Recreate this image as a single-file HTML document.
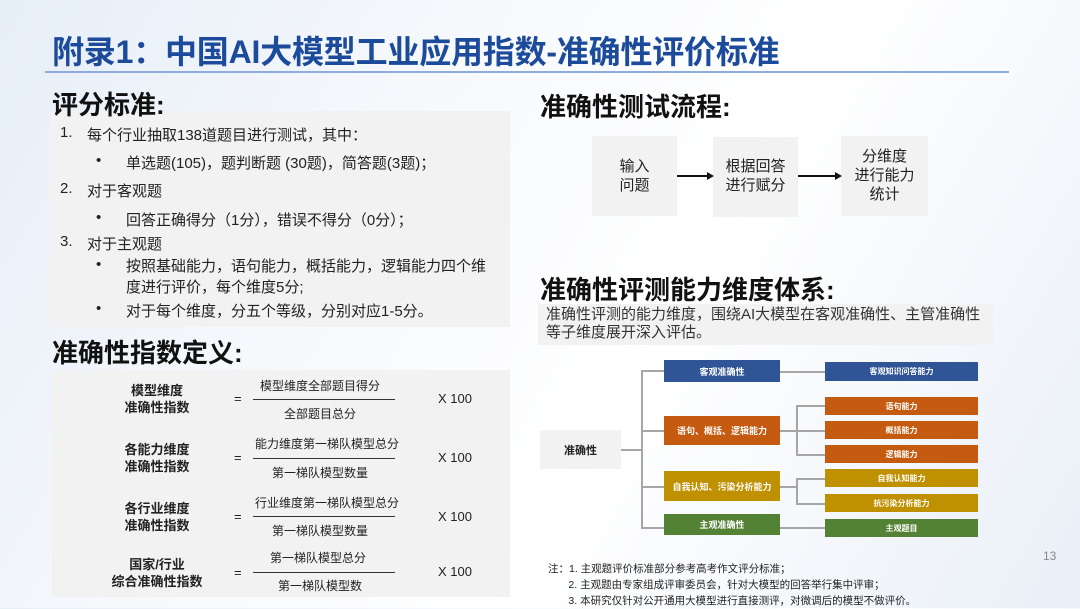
<!DOCTYPE html>
<html><head><meta charset="utf-8">
<style>
*{margin:0;padding:0;box-sizing:border-box}
body{width:1080px;height:608px;overflow:hidden;position:relative;font-family:"Liberation Sans","Noto Sans CJK SC",sans-serif;background:linear-gradient(120deg,#e6eef7 0%,#f7f9fc 35%,#ffffff 60%,#e9eff7 100%);color:#222}
.a{position:absolute;white-space:nowrap}
.h{font-weight:bold;font-size:26px;color:#111;line-height:28px;z-index:3}
.g{position:absolute;background:#f2f2f2}
.t{font-size:15px;color:#222}
.box{position:absolute;display:flex;align-items:center;justify-content:center;text-align:center;color:#fff;font-size:9px;font-weight:bold}
.ln{position:absolute;background:#a6a6a6}
.lab{position:absolute;font-size:13px;font-weight:bold;text-align:center;line-height:17px;width:140px}
.fr{position:absolute;font-size:12px;text-align:center;width:160px}
</style></head><body>
<div class="a" style="left:52px;top:35px;font-size:32px;line-height:34px;font-weight:bold;color:#1c4b9b;letter-spacing:-0.2px">附录1：中国AI大模型工业应用指数-准确性评价标准</div>
<div class="a" style="left:45px;top:71px;width:964px;height:2px;background:#8eacdc"></div>

<div class="g" style="left:50px;top:111px;width:460px;height:216px"></div>
<div class="a h" style="left:52px;top:91px">评分标准:</div>
<div class="a t" style="left:60px;top:124px">1.</div><div class="a t" style="left:87px;top:124px">每个行业抽取138道题目进行测试，其中：</div>
<div class="a t" style="left:96px;top:152px">•</div><div class="a t" style="left:126px;top:152px">单选题(105)，题判断题 (30题)，简答题(3题)；</div>
<div class="a t" style="left:60px;top:180px">2.</div><div class="a t" style="left:87px;top:180px">对于客观题</div>
<div class="a t" style="left:96px;top:209px">•</div><div class="a t" style="left:126px;top:209px">回答正确得分（1分），错误不得分（0分）；</div>
<div class="a t" style="left:60px;top:233px">3.</div><div class="a t" style="left:87px;top:233px">对于主观题</div>
<div class="a t" style="left:96px;top:256px">•</div><div class="a t" style="left:126px;top:256px;line-height:21px">按照基础能力，语句能力，概括能力，逻辑能力四个维<br>度进行评价，每个维度5分;</div>
<div class="a t" style="left:96px;top:300px">•</div><div class="a t" style="left:126px;top:300px">对于每个维度，分五个等级，分别对应1-5分。</div>

<div class="g" style="left:52px;top:370px;width:458px;height:227px"></div>
<div class="a h" style="left:52px;top:339px">准确性指数定义:</div>
<div class="lab" style="left:87px;top:382px">模型维度<br>准确性指数</div>
<div class="lab" style="left:87px;top:441px">各能力维度<br>准确性指数</div>
<div class="lab" style="left:87px;top:500px">各行业维度<br>准确性指数</div>
<div class="lab" style="left:87px;top:556px">国家/行业<br>综合准确性指数</div>
<div class="a" style="left:234px;top:391px;font-size:13px">=</div>
<div class="a" style="left:234px;top:450px;font-size:13px">=</div>
<div class="a" style="left:234px;top:509px;font-size:13px">=</div>
<div class="a" style="left:234px;top:565px;font-size:13px">=</div>
<div class="fr" style="left:240px;top:377px">模型维度全部题目得分</div><div class="a" style="left:253px;top:399px;width:142px;height:1px;background:#333"></div><div class="fr" style="left:240px;top:405px">全部题目总分</div>
<div class="fr" style="left:247px;top:435px">能力维度第一梯队模型总分</div><div class="a" style="left:253px;top:458px;width:142px;height:1px;background:#333"></div><div class="fr" style="left:240px;top:464px">第一梯队模型数量</div>
<div class="fr" style="left:247px;top:494px">行业维度第一梯队模型总分</div><div class="a" style="left:253px;top:516px;width:142px;height:1px;background:#333"></div><div class="fr" style="left:240px;top:522px">第一梯队模型数量</div>
<div class="fr" style="left:238px;top:549px">第一梯队模型总分</div><div class="a" style="left:253px;top:572px;width:142px;height:1px;background:#333"></div><div class="fr" style="left:240px;top:577px">第一梯队模型数</div>
<div class="a" style="left:438px;top:391px;font-size:13px">X 100</div>
<div class="a" style="left:438px;top:450px;font-size:13px">X 100</div>
<div class="a" style="left:438px;top:509px;font-size:13px">X 100</div>
<div class="a" style="left:438px;top:564px;font-size:13px">X 100</div>

<div class="a h" style="left:540px;top:93px">准确性测试流程:</div>
<div class="g" style="left:592px;top:136px;width:85px;height:80px"></div>
<div class="g" style="left:713px;top:137px;width:85px;height:80px"></div>
<div class="g" style="left:841px;top:136px;width:87px;height:80px"></div>
<div class="a" style="left:592px;top:157px;width:85px;text-align:center;font-size:15px;line-height:19px">输入<br>问题</div>
<div class="a" style="left:713px;top:157px;width:85px;text-align:center;font-size:15px;line-height:19px">根据回答<br>进行赋分</div>
<div class="a" style="left:841px;top:147px;width:87px;text-align:center;font-size:15px;line-height:19px">分维度<br>进行能力<br>统计</div>
<svg class="a" style="left:677px;top:170px" width="170" height="12"><path d="M0 6H32M121 6H160" stroke="#111" stroke-width="2"/><path d="M30 2L37 6L30 10Z M158 2L165 6L158 10Z" fill="#111"/></svg>

<div class="g" style="left:538px;top:304px;width:455px;height:41px"></div>
<div class="a h" style="left:540px;top:276px">准确性评测能力维度体系:</div>
<div class="a" style="left:546px;top:306px;font-size:15px;line-height:18px;color:#333">准确性评测的能力维度，围绕AI大模型在客观准确性、主管准确性<br>等子维度展开深入评估。</div>

<div class="g" style="left:540px;top:430px;width:81px;height:39px;display:flex;align-items:center;justify-content:center;font-size:11px;font-weight:bold">准确性</div>
<div class="ln" style="left:621px;top:449px;width:21px;height:2px"></div>
<div class="ln" style="left:641px;top:370px;width:2px;height:159px"></div>
<div class="ln" style="left:641px;top:370px;width:23px;height:2px"></div>
<div class="ln" style="left:641px;top:430px;width:23px;height:2px"></div>
<div class="ln" style="left:641px;top:486px;width:23px;height:2px"></div>
<div class="ln" style="left:641px;top:527px;width:23px;height:2px"></div>
<div class="ln" style="left:780px;top:371px;width:45px;height:2px"></div>
<div class="ln" style="left:780px;top:430px;width:16px;height:2px"></div>
<div class="ln" style="left:780px;top:486px;width:16px;height:2px"></div>
<div class="ln" style="left:780px;top:527px;width:45px;height:2px"></div>
<div class="ln" style="left:796px;top:405px;width:2px;height:50px"></div>
<div class="ln" style="left:796px;top:405px;width:29px;height:2px"></div>
<div class="ln" style="left:796px;top:430px;width:29px;height:2px"></div>
<div class="ln" style="left:796px;top:454px;width:29px;height:2px"></div>
<div class="ln" style="left:796px;top:478px;width:2px;height:26px"></div>
<div class="ln" style="left:796px;top:478px;width:29px;height:2px"></div>
<div class="ln" style="left:796px;top:503px;width:29px;height:2px"></div>

<div class="box" style="left:664px;top:360px;width:116px;height:22px;background:#2f5597">客观准确性</div>
<div class="box" style="left:664px;top:416px;width:116px;height:29px;background:#c55a11">语句、概括、逻辑能力</div>
<div class="box" style="left:664px;top:471px;width:116px;height:30px;background:#bf9000">自我认知、污染分析能力</div>
<div class="box" style="left:664px;top:514px;width:116px;height:21px;background:#548235">主观准确性</div>
<div class="box" style="left:825px;top:362px;width:153px;height:19px;background:#2f5597;font-size:8px">客观知识问答能力</div>
<div class="box" style="left:825px;top:397px;width:153px;height:18px;background:#c55a11;font-size:8px">语句能力</div>
<div class="box" style="left:825px;top:421px;width:153px;height:18px;background:#c55a11;font-size:8px">概括能力</div>
<div class="box" style="left:825px;top:445px;width:153px;height:18px;background:#c55a11;font-size:8px">逻辑能力</div>
<div class="box" style="left:825px;top:469px;width:153px;height:18px;background:#bf9000;font-size:8px">自我认知能力</div>
<div class="box" style="left:825px;top:494px;width:153px;height:18px;background:#bf9000;font-size:8px">抗污染分析能力</div>
<div class="box" style="left:825px;top:519px;width:153px;height:18px;background:#548235;font-size:8px">主观题目</div>

<div class="a" style="left:548px;top:561px;font-size:10.5px;line-height:16px;color:#222">注：1. 主观题评价标准部分参考高考作文评分标准；<br>&nbsp;&nbsp;&nbsp;&nbsp;&nbsp;&nbsp;&nbsp;2. 主观题由专家组成评审委员会，针对大模型的回答举行集中评审；<br>&nbsp;&nbsp;&nbsp;&nbsp;&nbsp;&nbsp;&nbsp;3. 本研究仅针对公开通用大模型进行直接测评，对微调后的模型不做评价。</div>
<div class="a" style="left:1043px;top:549px;font-size:12px;color:#888">13</div>
</body></html>
